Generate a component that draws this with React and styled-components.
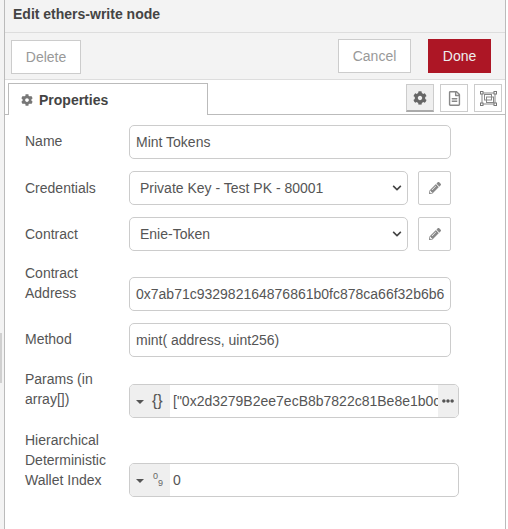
import React from "react";
import styled, { createGlobalStyle } from "styled-components";
import { FaCog, FaPencilAlt, FaRegFileAlt, FaEllipsisH, FaChevronDown } from "react-icons/fa";

const Global = createGlobalStyle`
  html, body { margin: 0; padding: 0; background: #fff; }
  body { font-family: "Liberation Sans", Arial, sans-serif; font-size: 14px; color: #555; }
  * { box-sizing: border-box; }
`;

const Page = styled.div`
  position: relative;
  width: 508px;
  height: 529px;
  display: flex;
  background: #fff;
  overflow: hidden;
`;
const Gutter = styled.div`
  width: 4px;
  background: #f3f3f3;
  display: flex;
  flex-direction: column;
  padding-top: 333px;
`;
const Handle = styled.div`
  width: 2px;
  height: 50px;
  background: #d0d0d0;
`;
const Tray = styled.div`
  width: 502px;
  border-left: 1px solid #bbb;
  border-right: 1px solid #bbb;
  display: flex;
  flex-direction: column;
`;
const Title = styled.div`
  height: 33px;
  background: #f3f3f3;
  border-bottom: 1px solid #ddd;
  padding: 6px 0 0 8px;
  font-weight: bold;
  font-size: 14px;
  line-height: 17px;
  color: #444;
`;
const ButtonBar = styled.div`
  height: 47px;
  background: #f3f3f3;
  border-bottom: 1px solid #ddd;
  display: flex;
  justify-content: space-between;
  padding: 6px 14px 0 6px;
`;
const Right = styled.div`
  display: flex;
  gap: 17px;
`;
const ActionButton = styled.div`
  height: 34px;
  width: ${(p) => p.$w}px;
  margin-top: ${(p) => p.$top || 0}px;
  border: 1px solid ${(p) => (p.$primary ? "#ad1625" : "#ccc")};
  background: ${(p) => (p.$primary ? "#ad1625" : "#fff")};
  color: ${(p) => (p.$primary ? "#eee" : "#999")};
  display: flex;
  align-items: center;
  justify-content: center;
  font-size: 14px;
`;
const TabBar = styled.div`
  height: 35px;
  display: flex;
  justify-content: space-between;
  border-bottom: 1px solid #bbb;
  padding: 3px 3px 0 3px;
`;
const Tab = styled.div`
  width: 200px;
  height: 32px;
  background: #fff;
  border: 1px solid #bbb;
  border-bottom: none;
  display: flex;
  align-items: center;
  gap: 6px;
  padding-left: 12px;
  font-weight: bold;
  color: #444;
  font-size: 14px;
`;
const TabIcons = styled.div`
  display: flex;
  gap: 6px;
  padding-top: 1px;
`;
const TabIcon = styled.div`
  width: 28px;
  height: 28px;
  border: 1px solid #ccc;
  ${(p) => p.$active && "border-bottom: 2px solid #aaa; background: #efefef;"}
  color: ${(p) => (p.$active ? "#666" : "#888")};
  display: flex;
  align-items: center;
  justify-content: center;
  font-size: 14px;
`;
const Form = styled.div`
  display: flex;
  flex-direction: column;
  gap: 12px;
  padding: 10px 0 0 20px;
`;
const Row = styled.div`
  display: flex;
  align-items: flex-end;
`;
const Label = styled.div`
  width: 104px;
  flex: none;
  line-height: 20px;
  margin-bottom: ${(p) => p.$drop ?? 8}px;
  color: #555;
  font-size: 14px;
`;
const Field = styled.div`
  height: 34px;
  width: ${(p) => p.$w}px;
  border: 1px solid #ccc;
  border-radius: 5px;
  background: #fff;
  display: flex;
  align-items: center;
  padding-left: ${(p) => p.$pad ?? 6}px;
  color: #555;
  font-size: 14px;
  white-space: nowrap;
  overflow: hidden;
`;
const SelectField = styled(Field)`
  justify-content: space-between;
  padding-left: 10px;
  padding-right: 5px;
`;
const Chevron = styled.span`
  display: flex;
  color: #444;
  font-size: 10px;
`;
const EditButton = styled.div`
  width: 33px;
  height: 34px;
  margin-left: 10px;
  border: 1px solid #ccc;
  border-radius: 2px;
  display: flex;
  align-items: center;
  justify-content: center;
  color: #888;
  font-size: 12px;
`;
const TypeBox = styled.div`
  flex: none;
  width: 40px;
  height: 100%;
  background: #efefef;
  display: flex;
  align-items: center;
  padding-left: 6px;
  gap: ${(p) => p.$gap}px;
  color: #333;
`;
const Caret = styled.span`
  width: 0;
  height: 0;
  border-left: 4px solid transparent;
  border-right: 4px solid transparent;
  border-top: 4px solid #555;
  margin-top: 1px;
`;
const Braces = styled.span`
  font-size: 16px;
  color: #555;
  font-family: "Liberation Sans", sans-serif;
  letter-spacing: 0;
  line-height: 1;
`;
const TypeValue = styled.div`
  flex: 1;
  min-width: 0;
  overflow: hidden;
  padding-left: 3px;
  line-height: 32px;
`;
const MoreBox = styled.div`
  flex: none;
  width: 20px;
  height: 100%;
  background: #efefef;
  display: flex;
  align-items: center;
  justify-content: center;
  color: #555;
  font-size: 12px;
`;

const ExpandIcon = () => (
  <svg width="17" height="15" viewBox="0 0 17 15" fill="none" stroke="#888" strokeWidth="1">
    <rect x="2" y="2" width="13" height="11" />
    <rect x="4.5" y="3.5" width="7" height="5.5" />
    <rect x="6.5" y="6" width="7" height="5.5" />
    <g fill="#fff" stroke="#777">
      <rect x="0.5" y="0.5" width="2.5" height="2.5" />
      <rect x="14" y="0.5" width="2.5" height="2.5" />
      <rect x="0.5" y="12" width="2.5" height="2.5" />
      <rect x="14" y="12" width="2.5" height="2.5" />
    </g>
  </svg>
);

const NumIcon = () => (
  <svg width="14" height="18" viewBox="0 0 14 18">
    <text x="1" y="8" fontSize="9" fontFamily="Liberation Sans" fill="#666">0</text>
    <text x="6" y="15" fontSize="9" fontFamily="Liberation Sans" fill="#666">9</text>
  </svg>
);

export default function App() {
  return (
    <Page>
      <Global />
      <Gutter><Handle /></Gutter>
      <Tray>
        <Title>Edit ethers-write node</Title>
        <ButtonBar>
          <ActionButton $w={70} $top={1}>Delete</ActionButton>
          <Right>
            <ActionButton $w={73}>Cancel</ActionButton>
            <ActionButton $w={63} $primary>Done</ActionButton>
          </Right>
        </ButtonBar>
        <TabBar>
          <Tab><FaCog size={12} color="#777" />Properties</Tab>
          <TabIcons>
            <TabIcon $active><FaCog /></TabIcon>
            <TabIcon><FaRegFileAlt size={15} /></TabIcon>
            <TabIcon><ExpandIcon /></TabIcon>
          </TabIcons>
        </TabBar>
        <Form>
          <Row>
            <Label>Name</Label>
            <Field $w={322}>Mint Tokens</Field>
          </Row>
          <Row>
            <Label $drop={7}>Credentials</Label>
            <SelectField $w={279}>Private Key - Test PK - 80001<Chevron><FaChevronDown /></Chevron></SelectField>
            <EditButton><FaPencilAlt /></EditButton>
          </Row>
          <Row>
            <Label $drop={7}>Contract</Label>
            <SelectField $w={279}>Enie-Token<Chevron><FaChevronDown /></Chevron></SelectField>
            <EditButton><FaPencilAlt /></EditButton>
          </Row>
          <Row>
            <Label>Contract Address</Label>
            <Field $w={322}>0x7ab71c932982164876861b0fc878ca66f32b6b6</Field>
          </Row>
          <Row>
            <Label>Method</Label>
            <Field $w={322}>mint( address, uint256)</Field>
          </Row>
          <Row>
            <Label $drop={9}>Params (in array[])</Label>
            <Field $w={330} $pad={0}>
              <TypeBox $gap={8}><Caret /><Braces>{"{}"}</Braces></TypeBox>
              <TypeValue>["0x2d3279B2ee7ecB8b7822c81Be8e1b0c5</TypeValue>
              <MoreBox><FaEllipsisH /></MoreBox>
            </Field>
          </Row>
          <Row>
            <Label $drop={7}>Hierarchical Deterministic Wallet Index</Label>
            <Field $w={330} $pad={0}>
              <TypeBox $gap={8}><Caret /><NumIcon /></TypeBox>
              <TypeValue>0</TypeValue>
            </Field>
          </Row>
        </Form>
      </Tray>
    </Page>
  );
}
